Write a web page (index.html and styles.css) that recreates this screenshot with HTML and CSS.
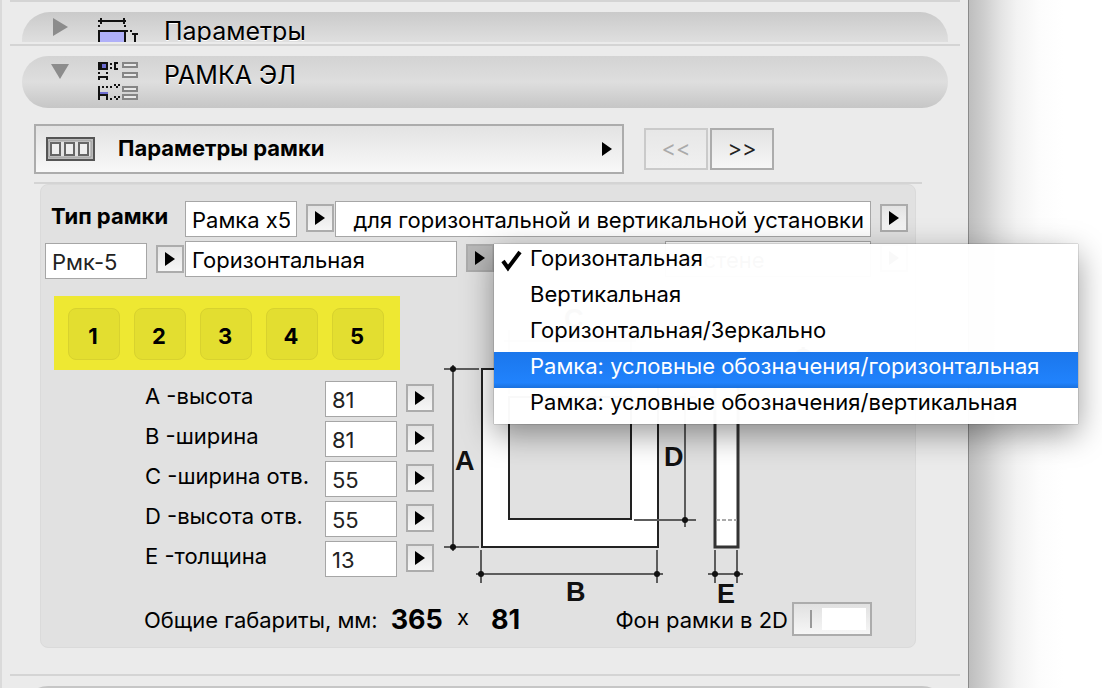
FILE: index.html
```html
<!DOCTYPE html>
<html lang="ru">
<head>
<meta charset="utf-8">
<title>Параметры рамки</title>
<link rel="stylesheet" href="styles.css">
</head>
<body>
<svg class="defs" width="0" height="0" aria-hidden="true">
  <symbol id="tri" viewBox="0 0 10 14"><path d="M0 0L10 7L0 14Z" fill="#000"/></symbol>
</svg>
<main class="window">
  <section class="group group-cut">
    <button class="bar bar-cut" type="button">
      <svg class="disclosure" viewBox="0 0 20 20"><path d="M3 1L18 10L3 19Z" fill="#8c8c8c"/></svg>
      <svg class="bar-icon" viewBox="0 0 42 42" shape-rendering="crispEdges">
        <path d="M1 14H27V42H1Z" fill="#b0b0f8"/>
        <path d="M0 4H28M0 14H30M1 13V42M27 13V42M37 16V42M34 17H40" stroke="#111" stroke-width="2" fill="none"/>
        <path d="M3 1V7M26 1V7M1 8V10M27 8V10M33 13V15" stroke="#111" stroke-width="2"/>
      </svg>
      <span>Параметры</span>
    </button>
  </section>
  <section class="group">
    <button class="bar" type="button">
      <svg class="disclosure" viewBox="0 0 20 20"><path d="M1 3H19L10 18Z" fill="#8c8c8c"/></svg>
      <svg class="bar-icon" viewBox="0 0 42 42" shape-rendering="crispEdges">
        <g transform="translate(0 1)">
        <path d="M0 0H10V8H0Z" fill="#111"/><path d="M4 2H8V6H4Z" fill="#6c6cd0"/>
        <path d="M12 1H14V3H12ZM12 5H14V7H12ZM16 0H20V2H18V6H20V8H16ZM0 10H2V12H0ZM8 10H10V12H8ZM0 14H10V18H8V16H2V18H0Z" fill="#111"/>
        <path d="M0 24H2V38H0ZM4 24H6V26H4ZM8 24H10V26H8ZM12 24H14V26H12ZM16 22H18V24H16ZM18 24H20V26H18ZM20 22H22V24H20ZM2 32H10V38H8V34H2ZM12 36H14V38H12ZM16 34H18V36H16ZM18 36H20V38H18ZM20 34H22V36H20Z" fill="#111"/>
        <path d="M2 30H10V32H2Z" fill="#6c6cd0"/>
        <path d="M25 1H39V5H25ZM25 11H39V15H25ZM25 25H39V29H25ZM25 33H39V37H25Z" fill="#e8e8e8" stroke="#858585" stroke-width="2"/>
        </g>
      </svg>
      <span>РАМКА ЭЛ</span>
    </button>
    <div class="pager">
      <button class="page-select" type="button">
        <svg class="frame-icon" viewBox="0 0 50 26"><path d="M2 2H49V24H2Z" fill="#bcbcbc" stroke="#555" stroke-width="2"/><path d="M4 5H46V21H4Z" fill="#e4e4e4" stroke="#999"/><path d="M6 7H15V19H6ZM20 7H29V19H20ZM34 7H43V19H34Z" fill="#eee" stroke="#666" stroke-width="2"/></svg>
        <span>Параметры рамки</span>
        <svg class="tri"><use href="#tri"/></svg>
      </button>
      <div class="nav">
        <button class="nav-btn" type="button" disabled>&lt;&lt;</button>
        <button class="nav-btn" type="button">&gt;&gt;</button>
      </div>
    </div>
    <div class="panel-wrap">
      <form class="panel">
        <div class="row">
          <label class="title" for="kind">Тип рамки</label>
          <div class="combo kind"><input id="kind" value="Рамка x5"><button class="pop" type="button" aria-label="Выбрать тип"><svg class="tri"><use href="#tri"/></svg></button></div>
          <div class="combo grow"><input class="right" aria-label="Установка" value="для горизонтальной и вертикальной установки"><button class="pop" type="button" aria-label="Выбрать установку"><svg class="tri"><use href="#tri"/></svg></button></div>
        </div>
        <div class="row">
          <div class="combo code"><input class="soft" aria-label="Код" value="Рмк-5"><button class="pop" type="button" aria-label="Выбрать код"><svg class="tri"><use href="#tri"/></svg></button></div>
          <div class="combo orient">
            <input aria-label="Ориентация" value="Горизонтальная"><button class="pop pressed" type="button" aria-label="Выбрать ориентацию"><svg class="tri"><use href="#tri"/></svg></button>
            <div class="menu" role="menu">
              <button type="button" role="menuitem" class="item"><svg class="check" viewBox="0 0 22 22"><path d="M2 11L7 18L19 2" fill="none" stroke="#000" stroke-width="4"/></svg>Горизонтальная</button>
              <button type="button" role="menuitem" class="item">Вертикальная</button>
              <button type="button" role="menuitem" class="item">Горизонтальная/Зеркально</button>
              <button type="button" role="menuitem" class="item active">Рамка: условные обозначения/горизонтальная</button>
              <button type="button" role="menuitem" class="item">Рамка: условные обозначения/вертикальная</button>
            </div>
          </div>
          <div class="combo place grow"><input aria-label="Размещение" value="на стене"><button class="pop" type="button" aria-label="Выбрать размещение"><svg class="tri"><use href="#tri"/></svg></button></div>
        </div>
        <div class="middle">
          <div class="left">
            <div class="posts">
              <button type="button">1</button><button type="button">2</button><button type="button">3</button><button type="button">4</button><button type="button">5</button>
            </div>
            <div class="sizes">
              <label for="a">A -высота</label><div class="combo"><input class="soft" id="a" value="81"><button class="pop" type="button" aria-label="A"><svg class="tri"><use href="#tri"/></svg></button></div>
              <label for="b">B -ширина</label><div class="combo"><input class="soft" id="b" value="81"><button class="pop" type="button" aria-label="B"><svg class="tri"><use href="#tri"/></svg></button></div>
              <label for="c">C -ширина отв.</label><div class="combo"><input class="soft" id="c" value="55"><button class="pop" type="button" aria-label="C"><svg class="tri"><use href="#tri"/></svg></button></div>
              <label for="d">D -высота отв.</label><div class="combo"><input class="soft" id="d" value="55"><button class="pop" type="button" aria-label="D"><svg class="tri"><use href="#tri"/></svg></button></div>
              <label for="e">E -толщина</label><div class="combo"><input class="soft" id="e" value="13"><button class="pop" type="button" aria-label="E"><svg class="tri"><use href="#tri"/></svg></button></div>
            </div>
          </div>
          <svg class="diagram" width="430" height="306" viewBox="0 0 430 306">
            <path d="M42 73H218V251H42ZM69 101V223H191V101Z" fill="#fff" fill-rule="evenodd" stroke="#222" stroke-width="2"/>
            <path d="M275 73H298V251H275Z" fill="#fff" stroke="#333" stroke-width="3"/>
            <path d="M276 224H297" stroke="#aaa" stroke-width="2" stroke-dasharray="4 2"/>
            <g stroke="#5c5c5c" stroke-width="2" fill="none">
              <path d="M13 69V255M4 73H39M4 251H39M245 97V231M194 224H256M194 101H256M36 278H223M41 254V287M217 254V287M268 278H303M275 254V287M297 254V287"/>
              <path d="M69 34V98M191 34V98M64 45H196" stroke-width="1"/>
            </g>
            <g fill="#111"><circle cx="13" cy="73" r="3"/><circle cx="13" cy="251" r="3"/><circle cx="245" cy="224" r="3"/><circle cx="41" cy="278" r="3"/><circle cx="217" cy="278" r="3"/><circle cx="275" cy="278" r="3"/><circle cx="297" cy="278" r="3"/></g>
            <text x="15" y="174">A</text><text x="126" y="305">B</text><text x="124" y="32">C</text><text x="224" y="170">D</text><text x="277" y="307">E</text>
            <text class="bevel" x="354" y="68">Фаска</text>
          </svg>
        </div>
        <div class="totals">
          <span>Общие габариты, мм:</span><strong class="w">365</strong><span class="times">x</span><strong>81</strong>
          <label class="bg-label" for="bg">Фон рамки в 2D</label>
          <button id="bg" class="pen" type="button"><span class="pen-line"></span><span class="pen-color"></span></button>
        </div>
      </form>
    </div>
  </section>
  <section class="group group-next"><div class="bar"></div></section>
</main>
<div class="shade"></div>
</body>
</html>
```
FILE: styles.css
```css
* { box-sizing: border-box; }
body {
  margin: 0;
  height: 100vh;
  overflow: hidden;
  display: flex;
  background: #fff;
  color: #000;
  font: 22px/28px Inter, "Noto Sans", sans-serif;
}
button, input { font: inherit; color: inherit; margin: 0; border-radius: 0; }
button { padding: 0; }
.defs { position: absolute; }
.window {
  flex: 1;
  min-width: 0;
  background: #ebebeb;
  border-left: 2px solid #dadada;
  border-right: 1px solid #8a8a8a;
  padding: 0 8px;
}
.shade {
  flex: 0 0 133px;
  background: linear-gradient(90deg, #bebebe 0, #cecece 15px, #e4e4e4 32px, #f3f3f3 48px, #fcfcfc 70px, #fff 95px);
}
.group { border-top: 2px solid #d4d4d4; padding: 10px 12px 0; }
.group-cut { padding-bottom: 2px; }
.bar {
  display: flex;
  align-items: flex-start;
  width: 100%;
  height: 52px;
  border: 0;
  border-radius: 26px;
  padding: 5px 0 0 28px;
  text-align: left;
  font-size: 25px;
  background: linear-gradient(#d3d3d3, #dedede 50%, #c6c6c6);
  text-shadow: 0 1px 0 #fff;
}
.bar-cut {
  height: 30px;
  overflow: hidden;
  border-radius: 28px 28px 0 0;
  background: linear-gradient(#cacaca, #dfdfdf);
}
.bar span { line-height: 28px; }
.disclosure { flex: none; width: 20px; height: 20px; margin-right: 28px; }
.bar-icon { flex: none; width: 42px; height: 42px; margin-right: 24px; }
.pager { display: flex; align-items: center; gap: 20px; margin: 16px 174px 0 12px; }
.page-select {
  flex: 1;
  display: flex;
  align-items: center;
  height: 50px;
  padding: 0 10px 0 9px;
  border: 2px solid #acacac;
  background: linear-gradient(#e3e3e3, #f8f8f8);
  font-weight: 700;
}
.page-select span { flex: 1; text-align: left; margin-left: 23px; padding-bottom: 2px; }
.frame-icon { width: 50px; height: 26px; }
.tri { display: block; width: 10px; height: 14px; }
.nav { display: flex; gap: 2px; }
.nav-btn { width: 64px; height: 42px; padding-bottom: 2px; border: 2px solid #acacac; background: linear-gradient(#e3e3e3, #f6f6f6); color: #222; }
.nav-btn:disabled { border-color: #cacaca; background: linear-gradient(#e7e7e7, #f0f0f0); color: #aaa; }
.panel-wrap { border-top: 2px solid #d4d4d4; margin: 8px 26px 26px 12px; padding: 0 6px; }
.panel {
  border: 1px solid #dadada;
  border-radius: 8px;
  background: #e1e1e1;
  padding: 16px 7px 11px 4px;
}
.row { display: flex; align-items: flex-start; gap: 1px; height: 40px; }
.title { flex: 0 0 139px; padding-left: 6px; font-weight: 700; line-height: 30px; }
.combo { position: relative; display: flex; align-items: center; gap: 9px; min-width: 0; }
.combo input {
  flex: 1;
  width: 0;
  min-width: 0;
  height: 36px;
  border: 1px solid #a6a6a6;
  background: #fff;
  padding: 2px 6px 0;
}
.combo .soft { color: #222; }
.combo .right { text-align: right; }
.pop {
  display: flex;
  align-items: center;
  justify-content: center;
  flex: none;
  width: 28px;
  height: 28px;
  margin-bottom: 2px;
  border: 2px solid #acacac;
  background: linear-gradient(#e3e3e3, #f6f6f6);
}
.pop.pressed { background: #b8b8b8; }
.kind { flex: 0 0 149px; }
.code { flex: 0 0 139px; padding-top: 2px; }
.code .pop { margin-bottom: 4px; }
.orient { flex: 0 0 309px; z-index: 1; }
.grow { flex: 1; }
.place { margin-left: 170px; }
.menu {
  position: absolute;
  left: 100%;
  top: 3px;
  width: 584px;
  background: rgba(255, 255, 255, .975);
  box-shadow: 0 0 1px rgba(0, 0, 0, .6), 0 10px 30px rgba(0, 0, 0, .4);
}
.item {
  position: relative;
  display: block;
  width: 100%;
  height: 36px;
  padding: 0 0 8px 36px;
  border: 0;
  background: none;
  text-align: left;
  white-space: nowrap;
}
.item.active { background: linear-gradient(rgba(22, 116, 235, .98), rgba(28, 128, 253, .98) 85%, rgba(22, 110, 220, .98)); color: #fff; }
.check { position: absolute; left: 7px; top: 6px; width: 22px; height: 22px; }
.middle { display: grid; grid-template-columns: 395px 1fr; margin-top: 15px; }
.left { padding-left: 9px; }
.posts { display: flex; gap: 14px; width: 346px; padding: 12px 16px 10px 14px; background: #eee832; }
.posts button {
  flex: 1;
  height: 52px;
  padding: 4px 2px 0 0;
  border: 1px solid #d8d22e;
  border-radius: 8px;
  background: #e3de30;
  font-weight: 700;
}
.sizes { display: grid; grid-template-columns: 180px 109px; row-gap: 4px; margin: 11px 0 0 91px; }
.sizes label { line-height: 30px; }
.diagram { overflow: visible; display: block; }
.diagram text { font: 700 27px "Liberation Sans", Arial, sans-serif; fill: #111; }
.diagram .bevel { font: 700 22px Inter, sans-serif; }
.totals { display: flex; align-items: center; height: 34px; padding: 0 36px 0 99px; white-space: nowrap; }
.totals span, .totals label, .totals strong { padding-top: 2px; }
.totals strong { font-size: 27px; }
.totals .w { margin-left: 13px; }
.totals .times { margin: 0 22px 4px 14px; padding: 0; }
.bg-label { margin-left: auto; }
.pen {
  display: flex;
  align-items: center;
  gap: 10px;
  width: 80px;
  height: 34px;
  margin-left: 4px;
  padding: 0 4px 0 16px;
  border: 2px solid #acacac;
  background: linear-gradient(#e1e1e1, #f6f6f6);
}
.pen-line { width: 2px; height: 18px; background: #999; }
.pen-color { flex: 1; height: 22px; background: #fff; }
.group-next .bar { background: #c6c6c6; }
```
